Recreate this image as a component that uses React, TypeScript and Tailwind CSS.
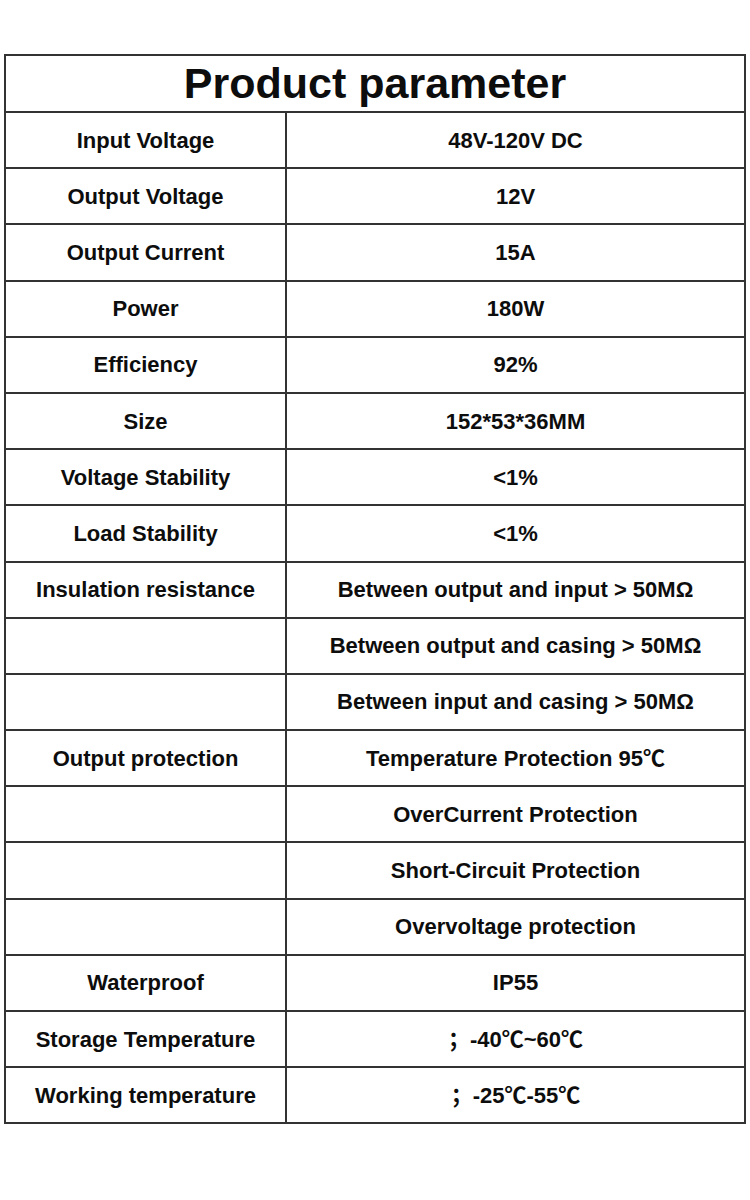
const rows: [string, string][] = [
  ["Input Voltage", "48V-120V DC"],
  ["Output Voltage", "12V"],
  ["Output Current", "15A"],
  ["Power", "180W"],
  ["Efficiency", "92%"],
  ["Size", "152*53*36MM"],
  ["Voltage Stability", "<1%"],
  ["Load Stability", "<1%"],
  ["Insulation resistance", "Between output and input > 50MΩ"],
  ["", "Between output and casing > 50MΩ"],
  ["", "Between input and casing > 50MΩ"],
  ["Output protection", "Temperature Protection 95℃"],
  ["", "OverCurrent Protection"],
  ["", "Short-Circuit Protection"],
  ["", "Overvoltage protection"],
  ["Waterproof", "IP55"],
  ["Storage Temperature", "；-40℃~60℃"],
  ["Working temperature", "；-25℃-55℃"],
];

const App = () => {
  return (
    <div
      className="min-h-[1200px] bg-white pt-[54px] pl-[4px] text-[#0d0d0d]"
      style={{ fontFamily: '"Liberation Sans", Arial, "Noto Sans CJK SC", sans-serif' }}
    >
      <div className="w-[742px] border-2 border-[#333]">
        <div className="flex h-[55px] items-center justify-center">
          <h1 className="text-[43px] font-bold leading-none">Product parameter</h1>
        </div>
        {rows.map(([label, value], i) => (
          <div key={i} className="flex h-[56.2px] border-t-2 border-[#333]">
            <div className="flex w-[281px] items-center justify-center border-r-2 border-[#333] text-[22px] font-bold">
              {label}
            </div>
            <div className="flex flex-1 items-center justify-center text-[22px] font-bold">
              {value}
            </div>
          </div>
        ))}
      </div>
    </div>
  );
};

export default App;
